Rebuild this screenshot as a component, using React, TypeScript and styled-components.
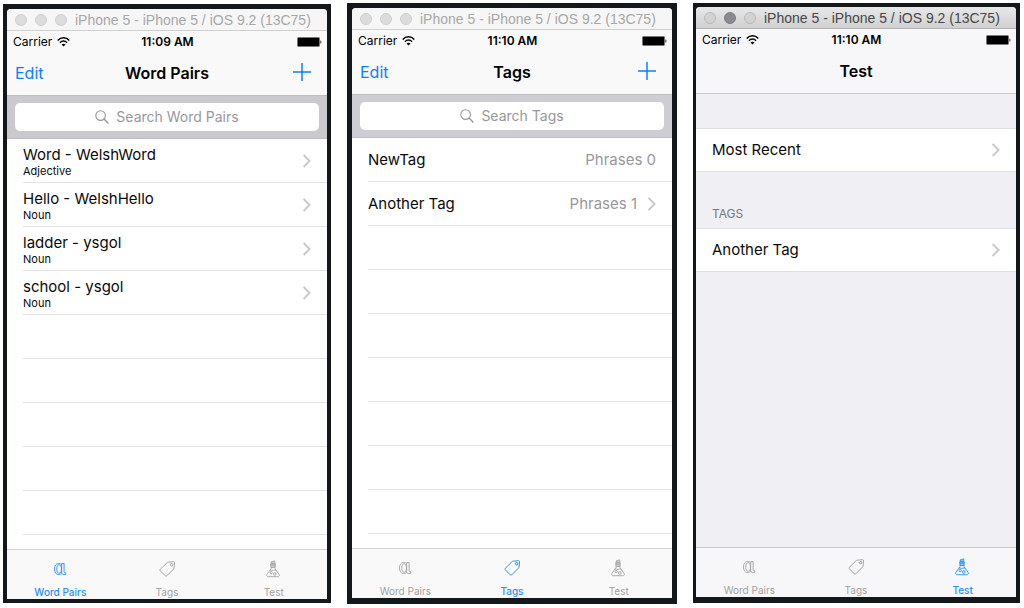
import React from "react";
import styled, { createGlobalStyle, css } from "styled-components";

const Global = createGlobalStyle`
  *, *::before, *::after { box-sizing: border-box; }
  body { margin: 0; background: #fff; font-family: Inter, "Liberation Sans", sans-serif; color: #0a0a0a; }
  h1, h2, ul { margin: 0; padding: 0; font-weight: inherit; }
  ul { list-style: none; }
  button, input { font: inherit; color: inherit; background: none; border: 0; padding: 0; margin: 0; }
  a { color: inherit; text-decoration: none; }
`;

type TabName = "Word Pairs" | "Tags" | "Test";

const Page = styled.main`
  display: grid;
  grid-template-columns: 328fr 330fr 327fr;
  gap: 16px;
  min-height: 100vh;
  padding: 3px 4px 4px 3px;
`;

const Frame = styled.section<{ $margin: string; $padding: string }>`
  display: flex;
  flex-direction: column;
  min-width: 0;
  margin: ${(p) => p.$margin};
  padding: ${(p) => p.$padding};
  background: #15181b;
`;

const Device = styled.div<{ $grouped?: boolean }>`
  flex: 1;
  display: flex;
  flex-direction: column;
  background: ${(p) => (p.$grouped ? "#efeff4" : "#fff")};
  border-radius: 4px 4px 0 0;
  overflow: hidden;
`;

const TitleBar = styled.header<{ $focused?: boolean }>`
  display: flex;
  align-items: center;
  gap: 8px;
  height: 22px;
  padding: 0 8px;
  font: 14px/20px "Liberation Sans", Arial, sans-serif;
  white-space: nowrap;
  border-bottom: 1px solid #d0d0d0;
  background: #f6f6f6;
  color: #a8a8a8;
  ${(p) =>
    p.$focused &&
    css`
      background: linear-gradient(#e8e8e8, #d0d0d0);
      border-color: #b4b4b4;
      color: #484848;
    `}
`;

const Light = styled.span<{ $fill: string; $edge: string }>`
  flex: none;
  width: 12px;
  height: 12px;
  border-radius: 50%;
  border: 1px solid ${(p) => p.$edge};
  background: ${(p) => p.$fill};
`;

const TopBars = styled.div<{ $grouped?: boolean }>`
  background: ${(p) => (p.$grouped ? "#f7f7f9" : "#f9f9f9")};
  border-bottom: 1px solid ${(p) => (p.$grouped ? "#c9c9cd" : "#bebec2")};
`;

const StatusBar = styled.div`
  display: grid;
  grid-template-columns: 1fr auto 1fr;
  align-items: center;
  height: 20px;
  padding: 1px 5px 0 6px;
  font-size: 12px;
  line-height: 20px;
  color: #000;
`;

const Carrier = styled.span`
  display: flex;
  align-items: center;
  gap: 5px;
`;

const Time = styled.time`
  font-weight: 600;
`;

const Battery = styled.svg`
  justify-self: end;
`;

const NavBar = styled.div`
  display: grid;
  grid-template-columns: 1fr auto 1fr;
  align-items: center;
  height: 44px;
  padding: 0 8px;
`;

const NavTitle = styled.h1`
  grid-column: 2;
  font-size: 16px;
  line-height: 24px;
  font-weight: 600;
  color: #000;
`;

const NavButton = styled.button<{ $end?: boolean }>`
  display: flex;
  justify-self: ${(p) => (p.$end ? "end" : "start")};
  padding: ${(p) => (p.$end ? "0 8px 2px" : "0")};
  font-size: 16px;
  line-height: 24px;
  color: #0a80ff;
`;

const SearchBar = styled.div<{ $tone: string }>`
  padding: 7px 8px;
  background: ${(p) => p.$tone};
  border-bottom: 1px solid #c0c0c4;
`;

const SearchField = styled.label`
  display: flex;
  align-items: center;
  justify-content: center;
  gap: 7px;
  height: 28px;
  border-radius: 5px;
  background: #fff;
  color: #98989c;
`;

const SearchInput = styled.input`
  field-sizing: content;
  min-width: 0;
  font-size: 14px;
  line-height: 20px;
  outline: 0;
  &::placeholder { color: #98989c; opacity: 1; }
`;

const Row = styled.li`
  height: 44px;
  margin-left: 16px;
  padding-right: 16px;
  border-bottom: 1px solid #e2e2e4;
`;

const GroupRow = styled.li`
  height: 44px;
  padding: 0 16px;
  background: #fff;
  border: solid #e0e0e4;
  border-width: 1px 0;
`;

const RowLink = styled.a`
  display: flex;
  align-items: center;
  gap: 10px;
  height: 100%;
`;

const RowText = styled.span<{ $stacked?: boolean }>`
  flex: 1;
  min-width: 0;
  padding-top: ${(p) => (p.$stacked ? "2px" : "0")};
  font-size: 15px;
  line-height: 20px;
`;

const Subtitle = styled.small`
  display: block;
  font-size: 11px;
  line-height: 13px;
`;

const Detail = styled.span`
  font-size: 15px;
  line-height: 20px;
  color: #98989c;
`;

const EmptyRows = styled.div`
  flex: 1;
  min-height: 58px;
  margin-left: 16px;
  background: repeating-linear-gradient(#fff 0 43px, #e2e2e4 43px 44px);
`;

const GroupedBody = styled.div`
  flex: 1;
  padding-top: 34px;
`;

const GroupHeader = styled.h2`
  height: 56px;
  padding: 32px 16px 0;
  font-size: 12px;
  line-height: 20px;
  color: #77777c;
`;

const TabBar = styled.nav<{ $grouped?: boolean }>`
  display: grid;
  grid-template-columns: repeat(3, 1fr);
  background: ${(p) => (p.$grouped ? "#f7f7f9" : "#f9f9f9")};
  border-top: 1px solid ${(p) => (p.$grouped ? "#c9c9cd" : "#d2d2d4")};
`;

const Tab = styled.a<{ $active: boolean }>`
  display: flex;
  flex-direction: column;
  align-items: center;
  gap: 5px;
  padding-top: 8px;
  font-size: 10px;
  line-height: 14px;
  font-weight: ${(p) => (p.$active ? 500 : 400)};
  color: ${(p) => (p.$active ? "#2b8ff8" : "#a3a3a3")};
`;

const Chevron = () => (
  <svg width="9" height="14" viewBox="0 0 9 14" fill="none" stroke="#c7c7cc" strokeWidth="1.8" aria-hidden>
    <path d="M1.600 1l6 6-6 6" />
  </svg>
);

const Wifi = () => (
  <svg width="13" height="10" viewBox="0 0 13 10" fill="none" stroke="#000" strokeWidth="1.5" aria-hidden>
    <path d="M.7 3.5C4-.1 9-.1 12.3 3.5" />
    <path d="M2.9 5.7c2.1-2.2 5.1-2.2 7.2 0" />
    <path d="M6.5 9.6L4.5 7.5c1.2-1.1 2.8-1.1 4 0z" fill="#000" stroke="none" />
  </svg>
);

const PlusIcon = () => (
  <svg width="18" height="18" viewBox="0 0 18 18" stroke="currentColor" strokeWidth="1.5" aria-hidden>
    <path d="M9 0v18M0 9h18" />
  </svg>
);

const Magnifier = () => (
  <svg width="14" height="14" viewBox="0 0 14 14" fill="none" stroke="currentColor" strokeWidth="1.1" aria-hidden>
    <circle cx="5.6" cy="5.6" r="4.8" />
    <path d="M9.1 9.1l4.3 4.3" strokeWidth="1.4" />
  </svg>
);

const AlphaIcon = () => (
  <svg width="22" height="22" viewBox="0 0 22 22" fill="none" stroke="currentColor" strokeWidth="0.9" aria-hidden>
    <path d="M12.700 7C12 5.900 11 5.400 9.700 5.400 7 5.400 5.500 7.800 5.500 11s1.500 5.600 4.200 5.600c1.300 0 2.300-.5 3-1.600.4 1.100 1 1.600 2 1.600h2v-2h-.8c-.6 0-.8-.3-.8-1V5.600h-2.400z" />
    <ellipse cx="10.100" cy="11" rx="2.300" ry="4.300" />
    <path d="M12.700 7v8" />
  </svg>
);

const TagIcon = () => (
  <svg width="22" height="22" viewBox="0 0 22 22" fill="none" stroke="currentColor" strokeWidth="1" strokeLinejoin="round" aria-hidden>
    <path d="M12.300 4.200l4.900-.5c.9-.1 1.400.4 1.300 1.300l-.5 5c-.1.500-.2.800-.6 1.200l-6.600 6.600c-.5.500-1 .5-1.500 0l-5-5c-.5-.5-.5-1 0-1.500l6.600-6.500c.4-.4.800-.6 1.400-.6z" />
    <circle cx="15.600" cy="6.700" r="1.200" />
  </svg>
);

const FlaskIcon = () => (
  <svg width="22" height="22" viewBox="1 0 22 22" fill="none" stroke="currentColor" strokeWidth="0.9" strokeLinejoin="round" aria-hidden>
    <path d="M9 5.500l.3-1.700 2-.2.600-.9 1 .6-.1 2.200z" fill="currentColor" fillOpacity="0.5" />
    <path d="M8 6.300h6M8.600 7.900h4.800" strokeWidth="1.100" />
    <path d="M9 6.500v4.100l-4 5.700c-.8 1.300-.2 2.400 1.200 2.400h9.600c1.400 0 2-1.100 1.200-2.400l-4-5.700V6.500" />
    <path d="M9 9.500h4M7.700 12.300c1.200-.6 2 .2 3.300 0s1.800-.5 3.100.1" />
    <circle cx="9.200" cy="14.600" r="1.100" />
    <circle cx="12.800" cy="16" r="1.300" />
  </svg>
);

const tabs: { name: TabName; Icon: React.FC }[] = [
  { name: "Word Pairs", Icon: AlphaIcon },
  { name: "Tags", Icon: TagIcon },
  { name: "Test", Icon: FlaskIcon },
];

interface SimulatorProps {
  title: TabName;
  time: string;
  margin: string;
  padding: string;
  grouped?: boolean;
  searchTone?: string;
  children: React.ReactNode;
}

function Simulator({ title, time, margin, padding, grouped, searchTone, children }: SimulatorProps) {
  const light = grouped ? { $fill: "#d2d2d2", $edge: "#b9b9b9" } : { $fill: "#dcdcdc", $edge: "#cecece" };
  const middle = grouped ? { $fill: "#8b8a90", $edge: "#7d7c82" } : light;
  return (
    <Frame $margin={margin} $padding={padding} aria-label={title}>
      <Device $grouped={grouped}>
        <TitleBar $focused={grouped}>
          <Light {...light} />
          <Light {...middle} />
          <Light {...light} />
          <span>iPhone 5 - iPhone 5 / iOS 9.2 (13C75)</span>
        </TitleBar>
        <TopBars $grouped={grouped}>
          <StatusBar>
            <Carrier>
              Carrier <Wifi />
            </Carrier>
            <Time>{time}</Time>
            <Battery width="25" height="10" viewBox="0 0 25 10" aria-hidden>
              <rect x="0.500" y="0.500" width="22" height="9" rx="1" fill="#000" stroke="#777" />
              <path d="M23.500 3.200c1.200.4 1.200 3.200 0 3.600z" fill="#000" />
            </Battery>
          </StatusBar>
          <NavBar>
            {!grouped && <NavButton type="button">Edit</NavButton>}
            <NavTitle>{title}</NavTitle>
            {!grouped && (
              <NavButton type="button" $end aria-label="Add">
                <PlusIcon />
              </NavButton>
            )}
          </NavBar>
        </TopBars>
        {searchTone && (
          <SearchBar $tone={searchTone}>
            <SearchField>
              <Magnifier />
              <SearchInput type="text" placeholder={`Search ${title}`} aria-label={`Search ${title}`} />
            </SearchField>
          </SearchBar>
        )}
        {children}
        <TabBar $grouped={grouped}>
          {tabs.map(({ name, Icon }) => (
            <Tab key={name} href="#" $active={name === title}>
              <Icon />
              {name}
            </Tab>
          ))}
        </TabBar>
      </Device>
    </Frame>
  );
}

const words = [
  { pair: "Word - WelshWord", kind: "Adjective" },
  { pair: "Hello - WelshHello", kind: "Noun" },
  { pair: "ladder - ysgol", kind: "Noun" },
  { pair: "school - ysgol", kind: "Noun" },
];

const tagList = [
  { name: "NewTag", phrases: 0 },
  { name: "Another Tag", phrases: 1 },
];

export default function App() {
  return (
    <>
      <Global />
      <Page>
        <Simulator title="Word Pairs" time="11:09 AM" margin="1px 0" padding="5px 4px 4px" searchTone="#c9c9ce">
          <ul>
            {words.map((w) => (
              <Row key={w.pair}>
                <RowLink href="#">
                  <RowText $stacked>
                    {w.pair}
                    <Subtitle>{w.kind}</Subtitle>
                  </RowText>
                  <Chevron />
                </RowLink>
              </Row>
            ))}
          </ul>
          <EmptyRows />
        </Simulator>

        <Simulator title="Tags" time="11:10 AM" margin="0" padding="5px 5px 6px" searchTone="#cecdd4">
          <ul>
            {tagList.map((t) => (
              <Row key={t.name}>
                <RowLink href="#">
                  <RowText>{t.name}</RowText>
                  <Detail>Phrases {t.phrases}</Detail>
                  {t.phrases > 0 && <Chevron />}
                </RowLink>
              </Row>
            ))}
          </ul>
          <EmptyRows />
        </Simulator>

        <Simulator title="Test" time="11:10 AM" margin="0 0 1px" padding="4px 4px 6px 3px" grouped>
          <GroupedBody>
            <ul>
              <GroupRow>
                <RowLink href="#">
                  <RowText>Most Recent</RowText>
                  <Chevron />
                </RowLink>
              </GroupRow>
            </ul>
            <GroupHeader>TAGS</GroupHeader>
            <ul>
              <GroupRow>
                <RowLink href="#">
                  <RowText>Another Tag</RowText>
                  <Chevron />
                </RowLink>
              </GroupRow>
            </ul>
          </GroupedBody>
        </Simulator>
      </Page>
    </>
  );
}
